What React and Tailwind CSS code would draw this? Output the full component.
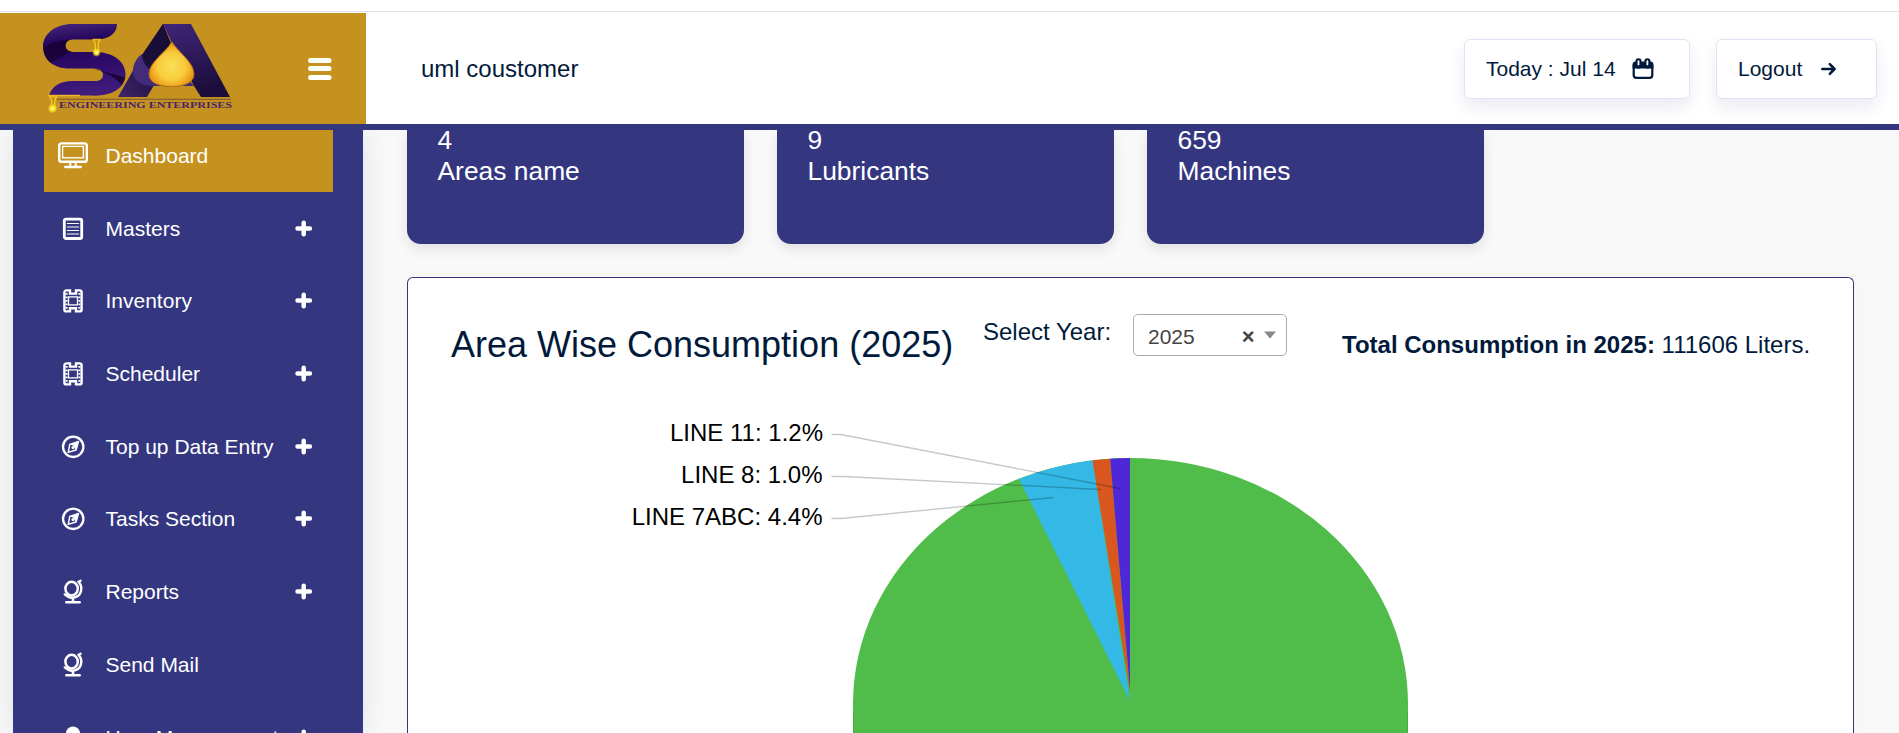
import React from "react";

const NAV = [
  { label: "Dashboard", icon: "monitor", active: true },
  { label: "Masters", icon: "list", plus: true },
  { label: "Inventory", icon: "film", plus: true },
  { label: "Scheduler", icon: "film", plus: true },
  { label: "Top up Data Entry", icon: "compass", plus: true },
  { label: "Tasks Section", icon: "compass", plus: true },
  { label: "Reports", icon: "globe", plus: true },
  { label: "Send Mail", icon: "globe" },
  { label: "User Management", icon: "user", plus: true },
];

const STATS = [
  { value: "4", label: "Areas name" },
  { value: "9", label: "Lubricants" },
  { value: "659", label: "Machines" },
];

function NavIcon({ name }) {
  const common = { width: 30, height: 30, viewBox: "0 0 30 30", fill: "none", stroke: "currentColor", className: "shrink-0" };
  if (name === "monitor")
    return (
      <svg {...common}>
        <rect x="1.2" y="2.4" width="27.6" height="18.4" rx="2.4" strokeWidth="2.4" />
        <rect x="4.6" y="5.4" width="20.8" height="11.4" strokeWidth="1.4" />
        <path d="M12.3 21v4M17.7 21v4" strokeWidth="2" />
        <path d="M7.2 26h15.600" strokeWidth="2.3" strokeLinecap="round" />
      </svg>
    );
  if (name === "list")
    return (
      <svg {...common}>
        <rect x="6.3" y="5.1" width="17.400" height="19.400" rx="1.800" strokeWidth="2.800" />
        <path d="M9.400 9.500h11.200M9.400 13h11.200M9.400 16.500h11.200M9.400 20h11.200" strokeWidth="1.200" strokeLinecap="round" />
      </svg>
    );
  if (name === "film")
    return (
      <svg {...common}>
        <path d="M12 4.400v3.200h6V4.400h3.600a2 2 0 0 1 2 2v17a2 2 0 0 1-2 2H18v-3.200h-6v3.200H8.400a2 2 0 0 1-2-2v-17a2 2 0 0 1 2-2z" strokeWidth="2.400" />
        <rect x="10.500" y="10.900" width="9" height="8" strokeWidth="1.300" />
        <path d="M8.600 7v16M21.400 7v16" strokeWidth="2" strokeDasharray="1.800 1.700" />
      </svg>
    );
  if (name === "compass")
    return (
      <svg {...common}>
        <circle cx="15.200" cy="14.800" r="10.200" strokeWidth="2.300" />
        <path d="M20.600 9.400 18 18 10.200 20.400l1.600-8z" strokeWidth="1.500" strokeLinejoin="round" />
        <path d="M20.900 9.100 17.800 18 15.700 13.900l-3.500-1.700z" fill="currentColor" stroke="none" />
        <circle cx="15" cy="15.600" r="1.600" fill="currentColor" stroke="none" />
      </svg>
    );
  if (name === "globe")
    return (
      <svg {...common}>
        <ellipse cx="13.600" cy="11.600" rx="6.200" ry="6.800" strokeWidth="2.500" />
        <path d="M22.600 3.700 20.600 4.800C25.600 11 23.500 20.400 14.500 20.700c-3 .1-5.300-1.100-7.700-3.300" strokeWidth="2.400" strokeLinecap="round" />
        <path d="M15 20.800v4" strokeWidth="2.600" />
        <path d="M8.300 25.200h13.400" strokeWidth="2.400" strokeLinecap="round" />
      </svg>
    );
  return (
    <svg {...common}>
      <circle cx="15" cy="10.500" r="7" fill="currentColor" stroke="none" />
      <path d="M3 28c0-6 5-9 12-9s12 3 12 9z" fill="currentColor" stroke="none" />
    </svg>
  );
}

function Plus() {
  return (
    <svg width="18" height="18" viewBox="0 0 18 18" stroke="currentColor" strokeWidth="4.500" strokeLinecap="round" className="mr-[20px] ml-auto shrink-0">
      <path d="M8.700 2.700v11.600M2.500 8.500h12.400" />
    </svg>
  );
}

function Logo() {
  return (
    <svg width="200" height="96" viewBox="0 4 200 96" className="ml-[38px] shrink-0">
      <defs>
        <linearGradient id="sBody" x1="0" y1="0" x2="0.150" y2="1">
          <stop offset="0" stopColor="#472880" />
          <stop offset="0.300" stopColor="#220558" />
          <stop offset="0.650" stopColor="#2f0b6b" />
          <stop offset="1" stopColor="#3f1c7c" />
        </linearGradient>
        <linearGradient id="aRight" x1="0" y1="0" x2="0.300" y2="1">
          <stop offset="0" stopColor="#40267a" />
          <stop offset="1" stopColor="#1c0e3c" />
        </linearGradient>
        <linearGradient id="aLeft" x1="0.700" y1="0.400" x2="0.100" y2="1">
          <stop offset="0" stopColor="#160c30" />
          <stop offset="1" stopColor="#3c2469" />
        </linearGradient>
        <radialGradient id="drop" cx="0.500" cy="0.550" r="0.560">
          <stop offset="0" stopColor="#fbdf56" />
          <stop offset="0.550" stopColor="#f8cb3c" />
          <stop offset="1" stopColor="#e88c0c" />
        </radialGradient>
        <radialGradient id="glow">
          <stop offset="0" stopColor="#fffbb0" />
          <stop offset="0.450" stopColor="#fde428" />
          <stop offset="1" stopColor="#fde428" stopOpacity="0" />
        </radialGradient>
      </defs>
      <path d="M79 7H35C17 7 5 17 5 29.500 5 43 16 51.500 31 51.500h25c5.500 0 9 2.500 9 6.500s-3.500 6-8 6H35c-13 0-21 5-24 14.500h41C74 80 87.500 71 87.500 57.500 87.500 46 78 36.500 60 35H36c-5 0-8.500-2.500-8.500-6.500s3-6 8.500-6h22C70 22.500 79 17 79 7z" fill="url(#sBody)" />
      <path d="M27.500 29c0-3 1.500-5 4-6-9 0-18 2-26 8 0 6 3 11 7 15 8-5 14-9 22-11-4-.5-7-3-7-6z" fill="#15022c" opacity="0.700" />
      <path d="M63 54c-1.500-1.500-4-2.500-8-2.500 10 3 22 6 32 9-.5 3-2 5-4 7-5-6-11-10-20-13.500z" fill="#130228" opacity="0.800" />
      <path d="M125 7 101 43 80 80h29l6.500-11 19-29z" fill="url(#aLeft)" />
      <path d="M125 7h28l39 73h-29l-7-11L134 26z" fill="url(#aRight)" />
      <path d="M125 7 104 38c-1 4 2 9 6 11l23-23z" fill="#190e38" />
      <path d="M104 37C97 42 94 50 95 57c1.500 8 9 12 20.500 12H156L134 44l-23 8c-4-4-7-9-7-15z" fill="#422b78" />
      <path d="M134 25c-5 9-23 20-23 32 0 8.500 9 12.500 22.500 12.500S156 65.500 156 57c0-12-17-23-22-32z" fill="url(#drop)" stroke="#b26b16" strokeWidth="1" />
      <path d="M54.500 22.500h8.500M11 79.500h8.500" stroke="#f0b81c" strokeWidth="1.400" />
      <path d="M55.500 23c3 3 1.500 8 1.500 13M62 23c-3 3-1.500 8-1.500 13M12 80c3 3 1.500 8 1.500 13M18.500 80c-3 3-1.500 8-1.500 13" fill="none" stroke="#f9cf1c" strokeWidth="1.200" />
      <path d="M10 78.500h32" stroke="#efb627" strokeWidth="1.400" />
      <circle cx="58.500" cy="35.500" r="4.500" fill="url(#glow)" />
      <circle cx="14.500" cy="91.500" r="5" fill="url(#glow)" />
      <path d="M19 82.300h174" stroke="#7d5636" strokeWidth="1" />
      <text x="21" y="91" textLength="173" lengthAdjust="spacingAndGlyphs" fill="#4a2468" className="font-['Liberation_Serif',serif] text-[9px] font-bold">ENGINEERING ENTERPRISES</text>
    </svg>
  );
}

function Pie() {
  return (
    <svg width="1445" height="340" viewBox="408 393 1445 340" className="block">
      <path d="M853 701V733H1408V701z" fill="#50bd4a" />
      <ellipse cx="1130.500" cy="704" rx="277.500" ry="246" fill="#50bd4a" />
      <path d="M853.500 712v21M1407.500 712v21" stroke="#48a843" strokeWidth="1" />
      <path d="M1130 701 1019 479A277 243 0 0 1 1092.500 460.300z" fill="#34b8e6" />
      <path d="M1130 692 1092.500 460.300A277 243 0 0 1 1110.200 458.700z" fill="#d9571f" />
      <path d="M1130 690 1110.200 458.700A277 243 0 0 1 1130 458z" fill="#4e27d6" />
      <g fill="none" stroke="#000" strokeOpacity="0.220" strokeWidth="1.300">
        <path d="M831.500 434.500H841L1120 488.500" />
        <path d="M831.500 476.500H844L1100.500 489.500" />
        <path d="M831.500 518.500H841L1053.500 497.500" />
      </g>
      <g fill="#000" textAnchor="end" className="text-[24px]">
        <text x="823" y="441">LINE 11: 1.2%</text>
        <text x="822.500" y="483">LINE 8: 1.0%</text>
        <text x="822.500" y="525">LINE 7ABC: 4.4%</text>
      </g>
    </svg>
  );
}

export default function App() {
  return (
    <div className="flex h-[733px] w-full flex-col overflow-hidden bg-[#f9f9f9] font-['Liberation_Sans',Arial,sans-serif] text-[21px] text-[#011a3b]">
      <header className="relative z-10 shrink-0 border-b-[6px] border-[#343780] bg-white pt-[11px]">
        <div className="flex h-[113px] items-stretch border-t border-[#dee2e6]">
          <div className="mt-px flex w-[366px] items-center bg-[#c59220]">
            <Logo />
            <svg width="24" height="24" viewBox="0 0 24 24" className="ml-[70px]" stroke="#fff" strokeWidth="5" strokeLinecap="round">
              <path d="M2.600 3.500h18.400M2.600 11.500h18.400M2.600 20.500h18.400" />
            </svg>
          </div>
          <div className="flex flex-1 items-center pt-px pr-[22px] pl-[55px]">
            <div className="text-[24px] leading-none">uml coustomer</div>
            <div className="ml-auto flex gap-[26px]">
              <div className="flex h-[60px] w-[226px] items-center rounded-md border border-[#e4e1f6] bg-white pl-[21px] shadow-[0_8px_16px_rgba(52,55,128,0.100)]">
                <span className="leading-none">Today : Jul 14</span>
                <svg width="22" height="22" viewBox="0 0 22 22" className="ml-4">
                  <rect x="1.700" y="5" width="18.600" height="14.800" rx="2.800" fill="none" stroke="#011a3b" strokeWidth="2.200" />
                  <path d="M0.600 10.500V6.500a3 3 0 0 1 3-3h14.800a3 3 0 0 1 3 3v4z" fill="#011a3b" />
                  <path d="M6.500 3.400v4M15.400 3.400v4" stroke="#011a3b" strokeWidth="6.200" strokeLinecap="round" />
                  <path d="M6.500 3.200v3.200M15.400 3.200v3.200" stroke="#fff" strokeWidth="1.800" strokeLinecap="round" />
                </svg>
              </div>
              <div className="flex h-[60px] w-[161px] items-center rounded-md border border-[#e4e1f6] bg-white pl-[21px] shadow-[0_8px_16px_rgba(52,55,128,0.100)]">
                <span className="leading-none">Logout</span>
                <svg width="16" height="14" viewBox="0 0 16 14" className="ml-[19px]" fill="none" stroke="#011a3b" strokeWidth="2.500" strokeLinecap="round" strokeLinejoin="round">
                  <path d="M1.300 7h12M8.800 2.200 13.600 7 8.800 11.800" />
                </svg>
              </div>
            </div>
          </div>
        </div>
      </header>

      <div className="flex min-h-0 flex-1 pl-[13px]">
        <aside className="h-[603px] w-[350px] shrink-0 overflow-hidden bg-[#343780] px-[31px] text-white shadow-[0_0_28px_rgba(52,55,128,0.120)]">
          <nav className="-mt-[10px] flex flex-col">
            {NAV.map((item) => (
              <div key={item.label} className="h-[72.700px]">
                <div className={item.active ? "flex h-[72px] w-[289px] items-center bg-[#c59220] pl-[14px]" : "flex h-[72px] w-[289px] items-center pl-[14px]"}>
                  <NavIcon name={item.icon} />
                  <span className="ml-[17.500px] pb-px leading-none whitespace-nowrap">{item.label}</span>
                  {item.plus && <Plus />}
                </div>
              </div>
            ))}
          </nav>
        </aside>

        <main className="ml-11 flex w-[1447px] flex-col">
          <div className="flex gap-[33px]">
            {STATS.map((s) => (
              <div key={s.label} className="h-[114px] w-[337px] rounded-b-[14px] bg-[#343780] pl-[30.500px] text-[26.400px] leading-[31.200px] text-white shadow-[0_5px_13px_rgba(0,0,0,0.100)]">
                <div className="-mt-[5.500px]">{s.value}</div>
                <div>{s.label}</div>
              </div>
            ))}
          </div>
          <section className="mt-[33px] flex-1 overflow-hidden rounded-t-md border border-b-0 border-[#343780] bg-white shadow-[0_0_20px_rgba(0,0,0,0.030)]">
            <div className="flex h-[115px] items-start pl-[43px] whitespace-nowrap">
              <h2 className="mt-[47px] w-[532px] text-[36px] leading-[40px]">Area Wise Consumption (2025)</h2>
              <span className="mt-[42px] w-[150px] text-[24px] leading-[24px]">Select Year:</span>
              <div className="mt-[36px] flex h-[42px] w-[154px] items-center rounded-[5px] border border-[#aaa] bg-white pt-[3px] pl-[14px] text-[#444]">
                <span className="leading-none">2025</span>
                <span className="ml-[47px] text-[22px] leading-none font-bold">×</span>
                <svg width="12" height="8" viewBox="0 0 12 8" className="-mt-1 ml-[9px] shrink-0">
                  <path d="M0 0.500h12L6 7.500z" fill="#888" />
                </svg>
              </div>
              <p className="mt-[55px] ml-[55px] text-[24px] leading-[24px]">
                <b>Total Consumption in 2025:</b> 111606 Liters.
              </p>
            </div>
            <Pie />
          </section>
        </main>
      </div>
    </div>
  );
}
